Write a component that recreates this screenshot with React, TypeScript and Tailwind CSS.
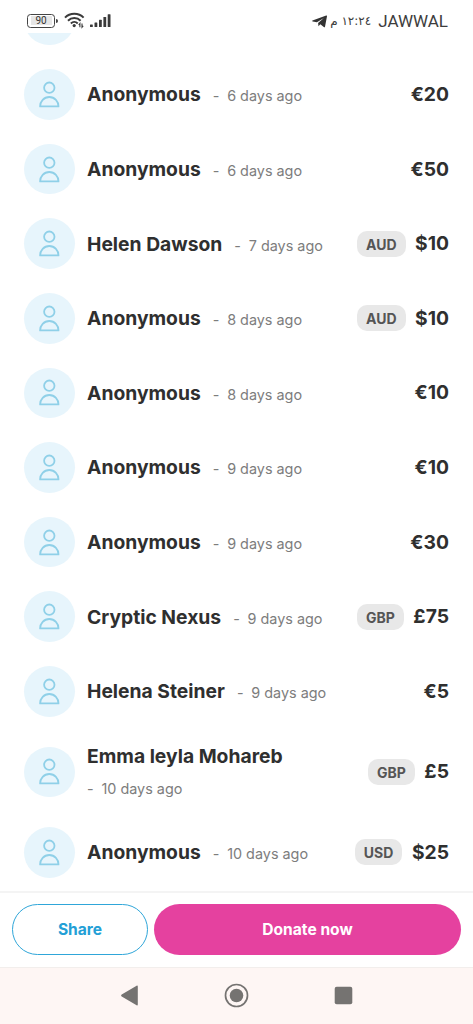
type Donation = {
  name: string;
  time: string;
  amount: string;
  currency?: string;
  wrap?: boolean;
};

const donations: Donation[] = [
  { name: "Anonymous", time: "6 days ago", amount: "€20" },
  { name: "Anonymous", time: "6 days ago", amount: "€50" },
  { name: "Helen Dawson", time: "7 days ago", amount: "$10", currency: "AUD" },
  { name: "Anonymous", time: "8 days ago", amount: "$10", currency: "AUD" },
  { name: "Anonymous", time: "8 days ago", amount: "€10" },
  { name: "Anonymous", time: "9 days ago", amount: "€10" },
  { name: "Anonymous", time: "9 days ago", amount: "€30" },
  { name: "Cryptic Nexus", time: "9 days ago", amount: "£75", currency: "GBP" },
  { name: "Helena Steiner", time: "9 days ago", amount: "€5" },
  {
    name: "Emma leyla Mohareb",
    time: "10 days ago",
    amount: "£5",
    currency: "GBP",
    wrap: true,
  },
  { name: "Anonymous", time: "10 days ago", amount: "$25", currency: "USD" },
];

function BatteryIcon() {
  return (
    <div className="flex items-center">
      <div className="flex h-[14px] w-[28px] items-center justify-center rounded-[3.5px] border-[1.3px] border-[#444] bg-white">
        <span className="flex h-[9px] w-[21px] items-center justify-center bg-[#e6e6e6] font-['Roboto',sans-serif] text-[10px] leading-none text-[#333]">
          90
        </span>
      </div>
      <div className="ml-[1px] h-[4px] w-[1.5px] rounded-r bg-[#444]" />
    </div>
  );
}

function WifiIcon() {
  return (
    <svg width="21" height="17" viewBox="0 0 21 17" fill="none">
      <g stroke="#3a3a3a" strokeWidth="2">
        <path d="M1 5.6C6 .4 14.6.4 19.6 5.6" />
        <path d="M4 8.7C7.4 5.2 13.2 5.2 16.6 8.7" />
        <path d="M6.9 11.5C8.9 9.5 11.7 9.5 13.7 11.5" />
      </g>
      <circle cx="10.2" cy="13.6" r="1.6" fill="#3a3a3a" />
      <path
        d="M15.9 15.2v-3.6l-1.2 1.4M18 11.6v3.6l1.2-1.4"
        stroke="#3a3a3a"
        strokeWidth="1.1"
      />
    </svg>
  );
}

function SignalIcon() {
  return (
    <svg width="21" height="14" viewBox="0 0 21 14" fill="#3a3a3a">
      <rect x="0" y="10.6" width="2.8" height="2.4" rx=".5" />
      <rect x="4.5" y="8.6" width="2.8" height="4.4" rx=".5" />
      <rect x="9" y="5.8" width="2.8" height="7.2" rx=".5" />
      <rect x="13.4" y="3" width="2.8" height="10" rx=".5" />
      <rect x="17.7" y="0.2" width="2.8" height="12.8" rx=".5" />
    </svg>
  );
}

function StatusBar() {
  return (
    <header className="flex h-[33px] shrink-0 items-end justify-between pb-[4px] pr-[25px] pl-[27px]">
      <div className="flex h-[17px] items-center">
        <BatteryIcon />
        <div className="ml-[6px]">
          <WifiIcon />
        </div>
        <div className="ml-[5px]">
          <SignalIcon />
        </div>
      </div>
      <div className="flex h-[16px] items-center text-[#3d3d3d]">
        <svg width="16" height="13" viewBox="0 0 16 13" fill="#333">
          <path d="M.5 5.5 14.2.6c.5-.2.9.1.8.7L13 11.7c-.1.6-.7.7-1.2.3L8.3 9.3l-1.8 1.9-.4-3.3 5.8-4.9-7 4.2L.7 6.5C.1 6.2 0 5.8.5 5.5Z" />
        </svg>
        <span
          dir="rtl"
          className="ml-[3px] w-[40px] font-['DejaVu_Sans',sans-serif] text-[12px] leading-4 whitespace-nowrap"
        >
          ١٢:٢٤ م
        </span>
        <span className="ml-[7px] font-['Roboto',sans-serif] text-[17px] leading-4">
          JAWWAL
        </span>
      </div>
    </header>
  );
}

function Avatar() {
  return (
    <div className="flex size-[50.6px] shrink-0 items-center justify-center rounded-full bg-[#e7f5fc]">
      <svg width="22" height="27" viewBox="0 0 22 27" fill="none">
        <g stroke="#8fd0e8" strokeWidth="1.8">
          <circle cx="11.3" cy="6.7" r="5.2" />
          <path
            d="M2.1 25.4c0-5 3.8-9.4 9.2-9.4s9.2 4.4 9.2 9.4Z"
            strokeLinejoin="round"
          />
        </g>
      </svg>
    </div>
  );
}

function DonationRow({ name, time, amount, currency, wrap }: Donation) {
  return (
    <li
      className={
        wrap
          ? "flex h-[86.6px] items-center"
          : "flex h-[74.6px] items-center"
      }
    >
      <Avatar />
      <div
        className={
          wrap
            ? "ml-[12.4px] flex flex-1 flex-col gap-[5px] pt-px"
            : "ml-[12.4px] flex flex-1 items-baseline gap-[12px] pt-[2px]"
        }
      >
        <span className="text-[19.3px] leading-7 font-bold whitespace-nowrap text-[#2f2f2f]">
          {name}
        </span>
        <span className="flex gap-[7.8px] text-[14.4px] leading-7 whitespace-nowrap text-[#7d7d7d]">
          <span>-</span>
          <span>{time}</span>
        </span>
      </div>
      {currency && (
        <span className="mr-[9.5px] flex h-[26px] items-center rounded-[10px] bg-[#e8e8e8] px-[9px] pt-px text-[14px] font-bold text-[#555]">
          {currency}
        </span>
      )}
      <span className="text-[19.3px] font-bold text-[#2f2f2f]">{amount}</span>
    </li>
  );
}

function ActionBar() {
  return (
    <div className="flex h-[76px] shrink-0 gap-[6px] border-t-2 border-[#f4f4f4] px-[12px] pt-[11px]">
      <button
        type="button"
        className="h-[51px] w-[136px] rounded-full border border-[#2fa6d9] text-[15.6px] font-bold text-[#249fd6]"
      >
        Share
      </button>
      <button
        type="button"
        className="h-[51px] flex-1 rounded-full bg-[#e5419f] text-[15.6px] font-bold text-white"
      >
        Donate now
      </button>
    </div>
  );
}

function NavigationBar() {
  return (
    <nav className="flex h-[57px] shrink-0 items-center justify-center gap-[82px] border-t border-[#f2eeec] bg-[#fef6f4] pb-[2px]">
      <svg width="25" height="25" viewBox="0 0 25 25" fill="#757371">
        <path d="M4.7 11.6 19.6 2.7c.7-.4 1.2-.1 1.2.7v18.2c0 .8-.5 1.1-1.2.7L4.7 13.4c-.8-.5-.8-1.3 0-1.8Z" />
      </svg>
      <svg width="25" height="25" viewBox="0 0 25 25">
        <circle
          cx="12.5"
          cy="12.5"
          r="11"
          fill="none"
          stroke="#757371"
          strokeWidth="1.7"
        />
        <circle cx="12.5" cy="12.5" r="6.8" fill="#757371" />
      </svg>
      <svg width="25" height="25" viewBox="0 0 25 25" fill="#757371">
        <rect x="3.7" y="3.7" width="17.6" height="17.6" rx="2" />
      </svg>
    </nav>
  );
}

function App() {
  return (
    <div className="flex h-screen flex-col overflow-hidden bg-white font-['Inter',sans-serif]">
      <StatusBar />
      <main className="min-h-0 flex-1 overflow-hidden px-[24px]">
        {/* row scrolled under the status bar */}
        <div className="flex h-[24.2px] items-end overflow-hidden pb-[12px]">
          <Avatar />
        </div>
        <ul>
          {donations.map((donation, index) => (
            <DonationRow key={index} {...donation} />
          ))}
        </ul>
      </main>
      <ActionBar />
      <NavigationBar />
    </div>
  );
}

export default App;
